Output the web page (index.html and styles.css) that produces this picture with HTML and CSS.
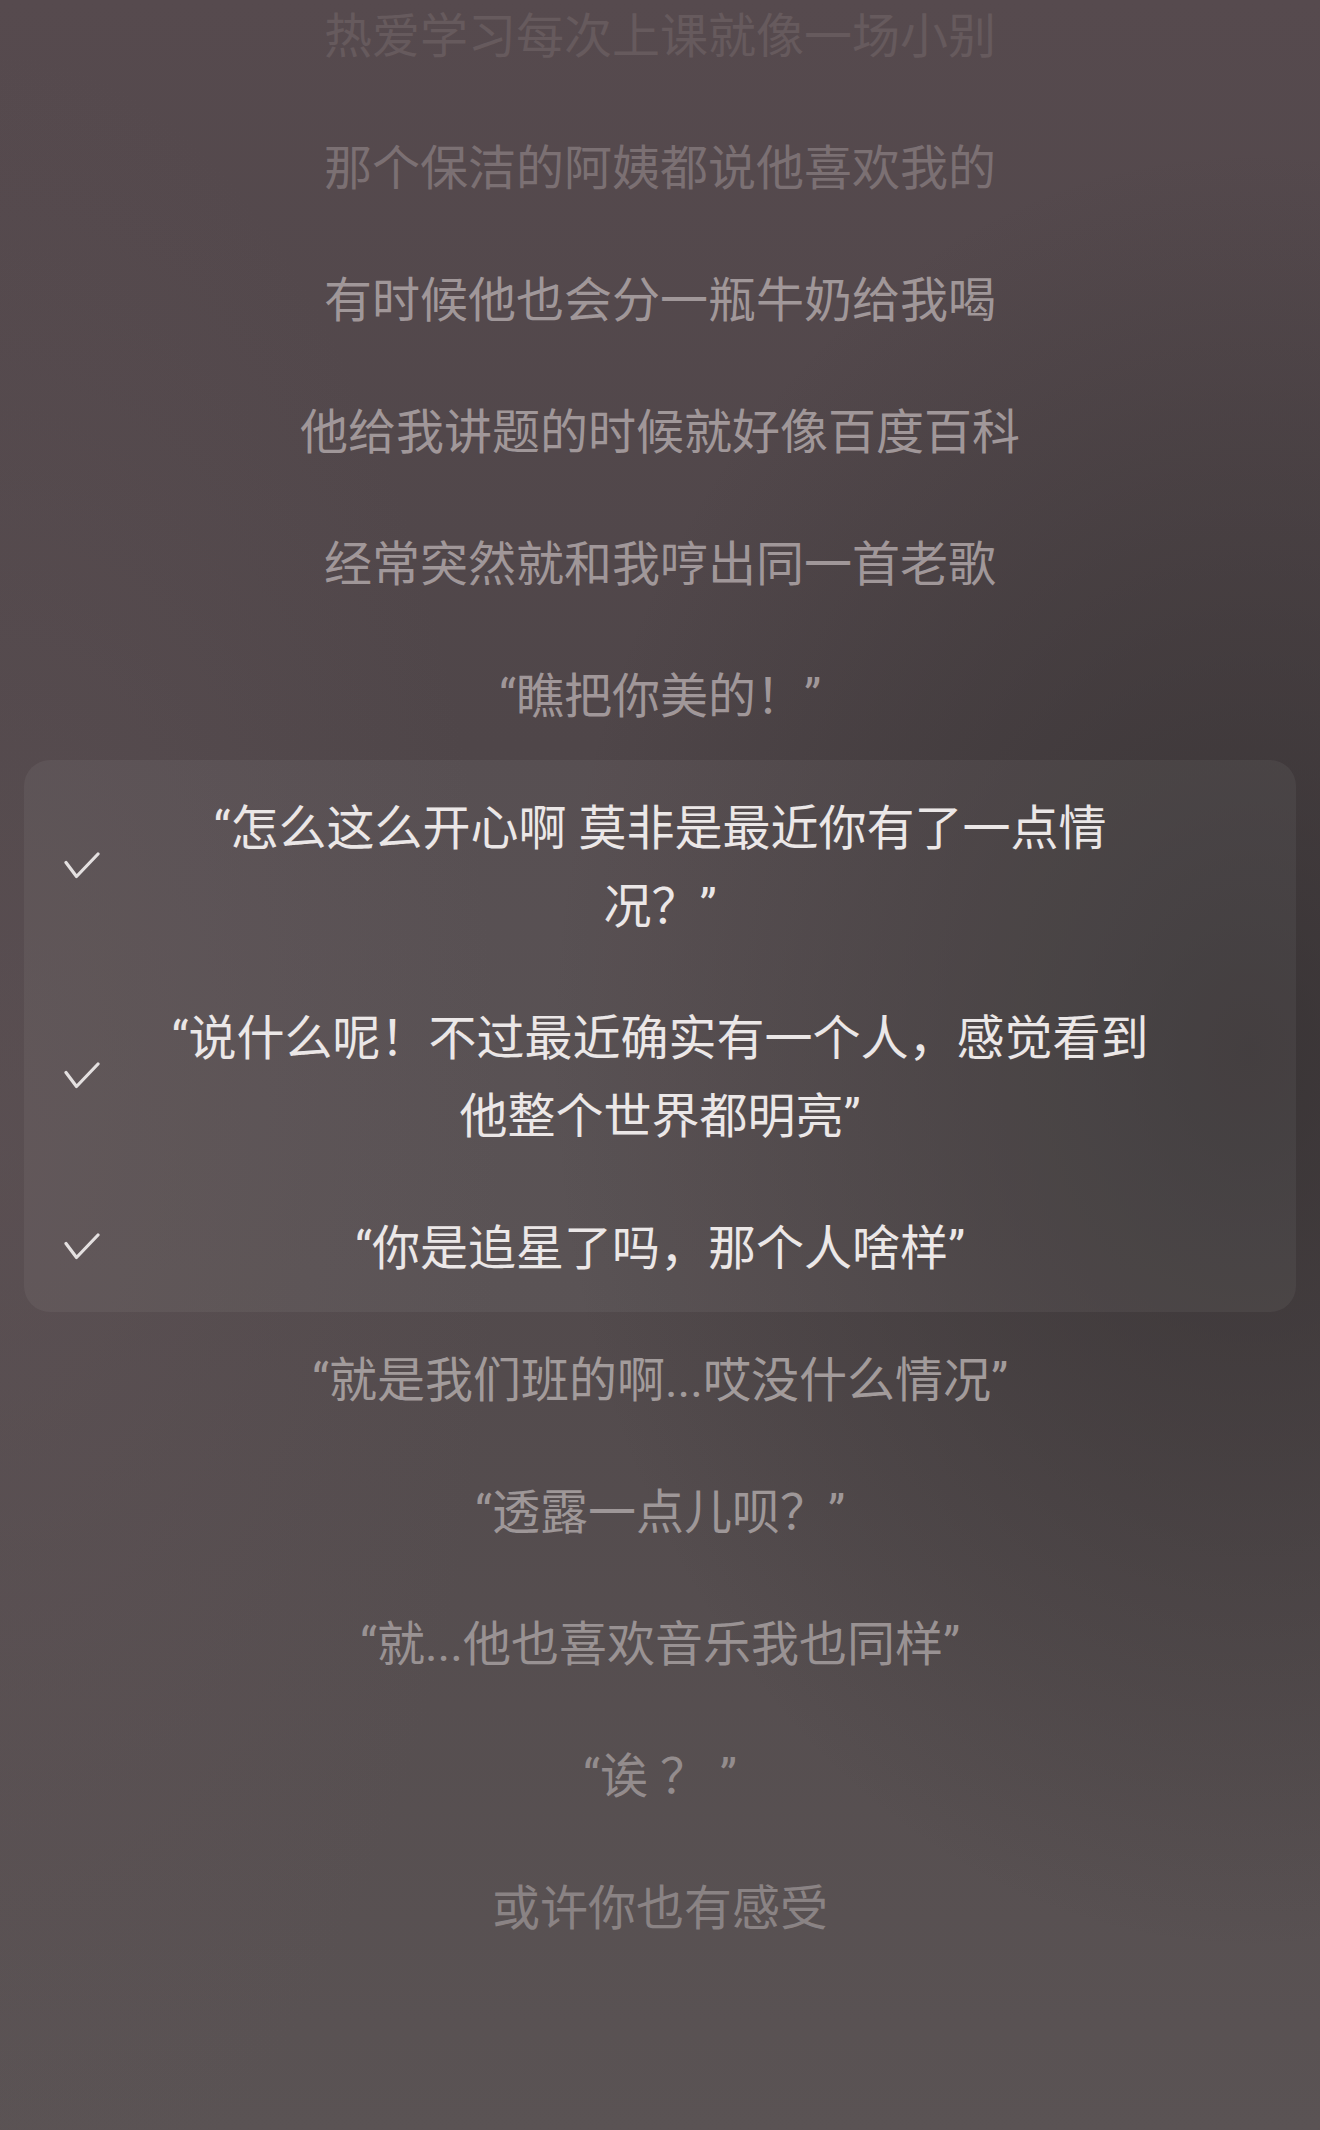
FILE: index.html
```html
<!DOCTYPE html>
<html lang="zh-CN">
<head>
<meta charset="utf-8">
<title>歌词</title>
<link rel="stylesheet" href="styles.css">
</head>
<body>
<div class="page">
  <div class="lyrics">
    <div class="row fade-1"><p class="text">热爱学习每次上课就像一场小别</p></div>
    <div class="row fade-2"><p class="text">那个保洁的阿姨都说他喜欢我的</p></div>
    <div class="row dim"><p class="text">有时候他也会分一瓶牛奶给我喝</p></div>
    <div class="row dim"><p class="text">他给我讲题的时候就好像百度百科</p></div>
    <div class="row dim"><p class="text">经常突然就和我哼出同一首老歌</p></div>
    <div class="row dim"><p class="text">“瞧把你美的！”</p></div>
    <div class="selected">
      <div class="row active">
        <svg class="check" viewBox="0 0 36 27" width="36" height="27"><path d="M2 10.5 L12.5 24.5 L34 2" fill="none" stroke="#e4e0e0" stroke-width="3.2" stroke-linecap="round" stroke-linejoin="round"/></svg>
        <p class="text">“怎么这么开心啊 莫非是最近你有了一点情况？”</p>
      </div>
      <div class="row active">
        <svg class="check" viewBox="0 0 36 27" width="36" height="27"><path d="M2 10.5 L12.5 24.5 L34 2" fill="none" stroke="#e4e0e0" stroke-width="3.2" stroke-linecap="round" stroke-linejoin="round"/></svg>
        <p class="text">“说什么呢！不过最近确实有一个人，感觉看到他整个世界都明亮”</p>
      </div>
      <div class="row active">
        <svg class="check" viewBox="0 0 36 27" width="36" height="27"><path d="M2 10.5 L12.5 24.5 L34 2" fill="none" stroke="#e4e0e0" stroke-width="3.2" stroke-linecap="round" stroke-linejoin="round"/></svg>
        <p class="text">“你是追星了吗，那个人啥样”</p>
      </div>
    </div>
    <div class="row after-1"><p class="text">“就是我们班的啊...哎没什么情况”</p></div>
    <div class="row after-2"><p class="text">“透露一点儿呗？”</p></div>
    <div class="row after-3"><p class="text">“就...他也喜欢音乐我也同样”</p></div>
    <div class="row after-4"><p class="text">“诶 ？ ”</p></div>
    <div class="row after-5"><p class="text">或许你也有感受</p></div>
  </div>
</div>
</body>
</html>
```
FILE: styles.css
```css
html, body {
  margin: 0;
  padding: 0;
}
body {
  width: 1320px;
  height: 2130px;
  overflow: hidden;
  font-family: "Roboto", "Noto Sans CJK SC", sans-serif;
  background-color: #554b4e;
  background-image:
    radial-gradient(ellipse 700px 900px at 1250px 1050px, rgba(50, 46, 47, 0.75), rgba(50, 46, 47, 0) 100%),
    radial-gradient(ellipse 500px 1100px at 0px 1150px, rgba(100, 86, 90, 0.45), rgba(100, 86, 90, 0) 100%),
    linear-gradient(180deg, #564a4e 0%, #4f4649 35%, #524a4c 60%, #5a5354 100%);
}
.page {
  padding: 0 24px;
}
.lyrics {
  margin-top: -32px;
  display: flex;
  flex-direction: column;
}
.row {
  display: grid;
  grid-template-columns: 136px 1fr 136px;
  align-items: center;
  padding: 30px 0 24px;
}
.text {
  grid-column: 2;
  margin: 0;
  font-size: 48px;
  line-height: 78px;
  text-align: center;
  font-weight: 400;
  color: #9c9395;
}
.check {
  grid-column: 1;
  grid-row: 1;
  margin-left: 40px;
  margin-top: -6px;
  display: block;
}
.fade-1 .text { color: #665a5d; }
.fade-2 .text { color: #7b7073; }
.dim .text { color: #a09799; }
.selected {
  background: rgba(255, 255, 255, 0.05);
  border-radius: 26px;
}
.active .text { color: #ebe7e7; }
.after-1 .text { color: #a29b9b; }
.after-2 .text { color: #9e9798; }
.after-3 .text { color: #999293; }
.after-4 .text { color: #938c8d; }
.after-5 .text { color: #8a8384; }
```
